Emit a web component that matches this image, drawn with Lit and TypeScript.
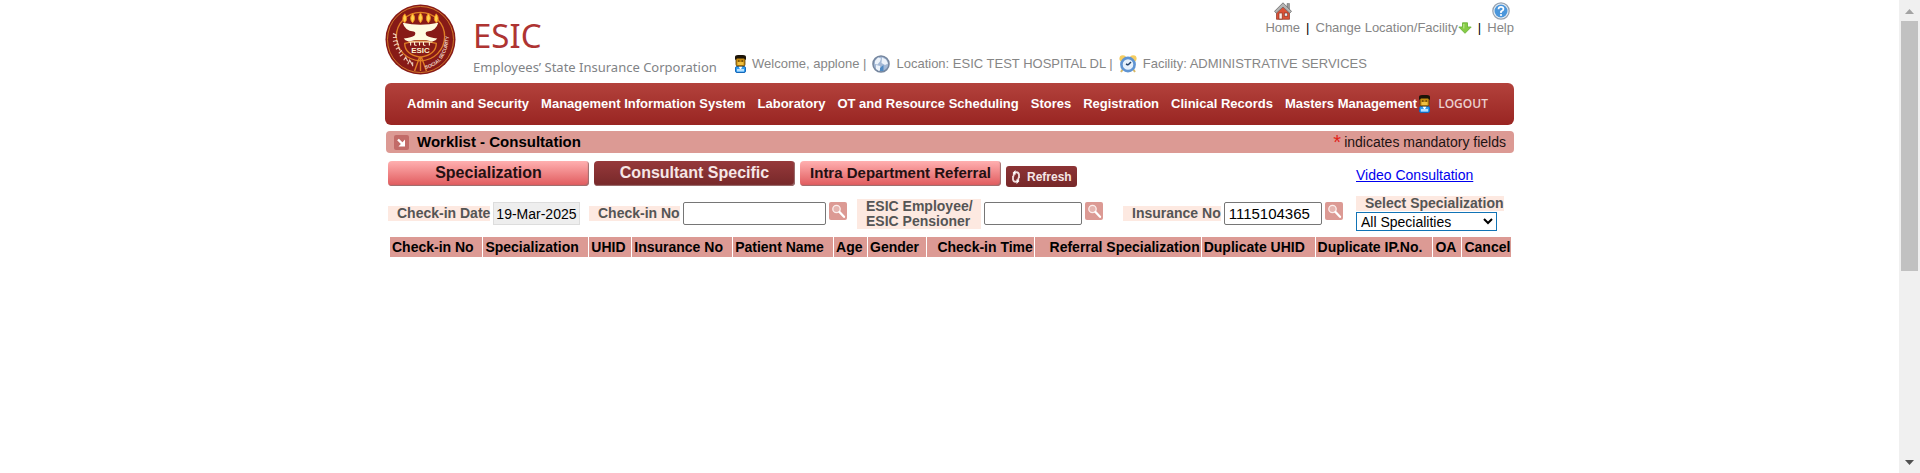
import { LitElement, html, css, svg } from "lit";
import { customElement, property } from "lit/decorators.js";

const MENU = [
  "Admin and Security",
  "Management Information System",
  "Laboratory",
  "OT and Resource Scheduling",
  "Stores",
  "Registration",
  "Clinical Records",
  "Masters Management",
];

const COLUMNS: { label: string; share: number; end?: boolean }[] = [
  { label: "Check-in No", share: 93 },
  { label: "Specialization", share: 106 },
  { label: "UHID", share: 43 },
  { label: "Insurance No", share: 101 },
  { label: "Patient Name", share: 101 },
  { label: "Age", share: 34 },
  { label: "Gender", share: 59 },
  { label: "Check-in Time", share: 108, end: true },
  { label: "Referral Specialization", share: 167, end: true },
  { label: "Duplicate UHID", share: 114 },
  { label: "Duplicate IP.No.", share: 118 },
  { label: "OA", share: 29 },
  { label: "Cancel", share: 49 },
];
const TOTAL = COLUMNS.reduce((sum, c) => sum + c.share, 0);

const GLYPHS: Record<string, { box: string; w: number; h: number; art: unknown }> = {
  user: {
    box: "0 0 11 18", w: 11, h: 18,
    art: svg`<rect x="0.5" y="11.500" width="10" height="6" rx="1.500" fill="#2f9bf0" stroke="#1668b8"/>
      <path d="M3.500 11.500h4l-2 3.500z" fill="#fff"/><rect x="2" y="14" width="7" height="2.500" fill="#b5e0ff"/>
      <rect x="1" y="2" width="9" height="9" rx="1.500" fill="#c48a10" stroke="#5a3d06" stroke-width=".8"/>
      <rect x="2.500" y="7" width="6" height="3" fill="#f0c040"/>
      <path d="M0 5V2Q0 0 3 0h5q3 0 3 2v3l-2-1.500H2z" fill="#1c1408"/>
      <path d="M3 6h1.500M6.500 6H8" stroke="#3a2604"/>`,
  },
  globe: {
    box: "0 0 18 18", w: 18, h: 18,
    art: svg`<circle cx="9" cy="9" r="8" fill="#a4b9d6" stroke="#76879f" stroke-width="1.600"/>
      <path d="M3 6l3-3.500 3 1-1 3-2.500 3-2.500-.5zM10 2.500l4 2 2 4-3 1.500-3.500-2zM4 10l4 1 1 3-2 2-3-2z" fill="#edf3fa"/>
      <path d="M9 12l2.500-2v6H8v-3z" fill="#4f8ac4"/>`,
  },
  clock: {
    box: "0 0 18 18", w: 18, h: 18,
    art: svg`<circle cx="3.800" cy="3.600" r="3.400" fill="#f5cd62"/><circle cx="14.200" cy="3.600" r="3.400" fill="#f5cd62"/>
      <path d="M4 14l-2 3M14 14l2 3" stroke="#d8b868" stroke-width="2"/>
      <circle cx="9" cy="9.500" r="6.600" fill="#e6f1fc" stroke="#5f94d2" stroke-width="2.600"/>
      <path d="M9 10l3-3M9 10l-2-1" stroke="#25436b" stroke-width="1.500"/>`,
  },
  home: {
    box: "0 0 18 18", w: 18, h: 18,
    art: svg`<path d="M13 1.500h2.500v6H13z" fill="#9a9a9a" stroke="#666" stroke-width=".5"/>
      <path d="M2.500 9.500L9 4l6.500 5.500v7.800h-13z" fill="#dc5136" stroke="#8b3222" stroke-width=".7"/>
      <path d="M9 .8L.5 9.300l1.800 1.900L9 5l6.700 6.200 1.800-1.900z" fill="#b5b5b5" stroke="#6a6a6a" stroke-width=".8"/>
      <rect x="5" y="11" width="3.200" height="6" fill="#fbeee8" stroke="#8b3222" stroke-width=".7"/>
      <rect x="10.300" y="11" width="3.400" height="3.200" fill="#e4eef6" stroke="#8b3222" stroke-width=".7"/>`,
  },
  help: {
    box: "0 0 18 18", w: 18, h: 18,
    art: svg`<circle cx="9" cy="9" r="8.200" fill="#e6edf4" stroke="#95a2b0" stroke-width="1.200"/>
      <circle cx="9" cy="9" r="6.500" fill="#4a96db"/>
      <path d="M6.500 7.200Q6.600 4.900 9 4.900t2.500 2.200Q11.500 8.300 9 9.500V11" fill="none" stroke="#fff" stroke-width="1.700"/>
      <circle cx="9" cy="13" r="1.100" fill="#fff"/>`,
  },
  down: {
    box: "0 0 14 12", w: 14, h: 12,
    art: svg`<path d="M4.500.8h5v4.200h3.700L7 11.300.8 5h3.700z" fill="#86cc45" stroke="#6cb33a" stroke-width=".9" stroke-linejoin="round"/>
      <path d="M5.800 2v4.500" stroke="#b9e78a" stroke-width="1.200"/>`,
  },
  corner: {
    box: "0 0 15 15", w: 15, h: 15,
    art: svg`<rect width="15" height="15" rx="2" fill="#c26b68"/>
      <path d="M4 4.500l5 5" stroke="#fff" stroke-width="2.400"/><path d="M11 4.500v7H4.500z" fill="#fff"/>`,
  },
  search: {
    box: "0 0 18 18", w: 18, h: 18,
    art: svg`<rect width="18" height="18" rx="2" fill="#dc9a94"/>
      <circle cx="7.500" cy="7" r="3.700" fill="#e5b5b0" stroke="#fbeeec" stroke-width="1.300"/>
      <path d="M10.500 10l4.500 4.800" stroke="#fff" stroke-width="2.300" stroke-linecap="round"/>`,
  },
  refresh: {
    box: "0 0 10 14", w: 10, h: 14,
    art: svg`<path d="M8 8V4.500Q7.500 2 5 2.300L3.500 3Q2.500 4 2.500 6.500" fill="none" stroke="#f3dede" stroke-width="1.800"/>
      <path d="M2 6v3.500Q2.500 12 5 11.700L6.500 11Q7.500 10 7.500 7.500" fill="none" stroke="#f3dede" stroke-width="1.800"/>
      <path d="M4.500 0v5L1.500 3zM5.500 14V9l3 2z" fill="#fff"/>`,
  },
};

@customElement("ui-glyph")
export class UiGlyph extends LitElement {
  @property() name = "user";
  static styles = css`
    :host { display: inline-flex; flex: none; }
    svg { display: block; }
  `;
  render() {
    const g = GLYPHS[this.name];
    return html`<svg width=${g.w} height=${g.h} viewBox=${g.box} aria-hidden="true">${g.art}</svg>`;
  }
}

@customElement("esic-emblem")
export class EsicEmblem extends LitElement {
  static styles = css`
    :host { display: block; flex: none; }
    svg { display: block; }
    text { font-family: "Liberation Sans", Arial, sans-serif; font-weight: bold; }
  `;
  render() {
    return html`<svg width="71" height="71" viewBox="0 0 72 72" role="img" aria-label="ESIC emblem">
      <circle cx="36" cy="36" r="35.500" fill="#871a17"/>
      <circle cx="36" cy="36" r="33.500" fill="none" stroke="#d9822b" stroke-width=".9"/>
      <circle cx="36" cy="33" r="24.500" fill="none" stroke="#e07f25" stroke-width="1.400"/>
      <g fill="#ffd34d" stroke="#f08a1c" stroke-width="1">
        <path d="M20 10q4 5 0 9-4-4 0-9zM28 9.500q4 5 0 9.500-4-4 0-9.500zM36 9q4 5 0 10-4-5 0-10zM44 9.500q4 5 0 9.500-4-4 0-9.500zM52 10q4 5 0 9-4-4 0-9z"/>
      </g>
      <path d="M18 19q18 4 36 0-2 8-11 9-3 1-1 4 3 2 11 3-1 2-5 3-12-3-24 0-4-1-5-3 8-1 11-3 2-3-1-4-9-1-11-9z" fill="#fffbe0"/>
      <path d="M20 40q16-5 32 0 0 11-16 14-16-3-16-14zM35 54L30 68M37 54l5 14M36 53v15" fill="none" stroke="#e07f25" stroke-width="1.400"/>
      <path d="M24 38.500h24M26 39v3M30 39v2.500l2 .5M35 39v3M39 39v2.500l2 .5M45 39v3" fill="none" stroke="#fff3d0" stroke-width="1.100"/>
      <text x="36" y="50" font-size="8" text-anchor="middle" fill="#fff3d0">ESIC</text>
      <path d="M8 30l3 1v3M8 34h4M8 38l4-1 1 2M9 42l4-2 1 2M11 46l3-2 1 3M14 50l3-3M15 53l3-2M19 57l2-3 2 4M23 61l2-4 3 5M28 59v4" fill="none" stroke="#e9c9b8" stroke-width="1.200"/>
      <path id="low" d="M41 66Q50 64 57 57" fill="none"/>
      <path id="high" d="M57 56Q65 46 65 28" fill="none"/>
      <text font-size="5" fill="#f0d8c8"><textPath href="#low">SOCIAL</textPath></text>
      <text font-size="5" fill="#f0d8c8"><textPath href="#high">SECURITY</textPath></text>
    </svg>`;
  }
}

@customElement("app-root")
export class AppRoot extends LitElement {
  static styles = css`
    :host {
      display: flex;
      min-height: 100vh;
      background: #fff;
      color: #000;
      font: 14px/16px "Liberation Sans", Arial, sans-serif;
    }
    * { box-sizing: border-box; }
    a { color: inherit; text-decoration: none; }
    .page { flex: 1; min-width: 0; }
    .sheet { max-width: 1129px; margin: 0 auto; }

    .header { display: flex; height: 83px; }
    .emblem { padding-top: 4px; }
    .brand { padding: 14px 0 0 17px; width: 279px; color: #7f8386; font: 13px/18px "Noto Sans", sans-serif; flex: none; white-space: nowrap; }
    .brand h1 { margin: 0; color: #ae3432; font: 33px/44px "Noto Sans", sans-serif; }
    .side { flex: 1; display: flex; flex-direction: column; justify-content: space-between; color: #868686; font-size: 13px; }
    .links { display: flex; justify-content: flex-end; align-items: flex-end; gap: 6px; padding-top: 2px; }
    .links .stack { display: flex; flex-direction: column; align-items: center; }
    .links .inline { display: flex; align-items: center; }
    .bar { color: #000; }
    .who { display: flex; align-items: center; gap: 6px; padding-bottom: 10px; white-space: nowrap; }

    .menu {
      display: flex; align-items: center; height: 42px; padding: 0 22px;
      border-radius: 6px; color: #fff; font-size: 13px; font-weight: bold; white-space: nowrap;
      background: linear-gradient(#b3423c, #992522);
    }
    .menu .items { display: flex; gap: 12px; }
    .logout { display: flex; align-items: center; gap: 8px; margin-left: 2px; color: #ecd0ce; font: 600 12px/16px "Open Sans", sans-serif; }

    .title {
      display: flex; align-items: center; height: 22px; margin: 6px 0 0 1px; padding: 0 8px;
      border-radius: 4px; background: #dc9a94;
    }
    .title h2 { flex: 1; margin: 0 0 0 8px; font-size: 15px; line-height: 20px; }
    .star { color: #e2231a; font-size: 20px; margin-right: 3px; }
    .note { display: flex; align-items: center; font-size: 14px; color: #1c1212; }

    .grid { display: grid; grid-template-columns: 201fr 268fr 266fr 233fr 158fr; padding-left: 3px; }
    .tabs { grid-column: span 4; display: flex; gap: 5px; align-items: flex-start; padding-top: 8px; }
    .tab {
      width: 201px; height: 25px; border: 0; border-radius: 4px; padding: 0 0 2px;
      font: bold 16px/20px "Liberation Sans", Arial, sans-serif; color: #241012;
      background: linear-gradient(#ffb0b0, #e0595c); box-shadow: inset -1px -1px 1px #9c7070;
    }
    .tab.long { font-size: 15px; }
    .tab.dark { color: #f6e6e6; background: linear-gradient(#96393b, #762829); }
    .refresh {
      display: flex; align-items: center; gap: 6px; height: 21px; margin-top: 5px; padding: 0 5px;
      border: 0; border-radius: 3px; color: #f6e6e6; background: linear-gradient(#8c3335, #762829);
      font: bold 12px/16px "Liberation Sans", Arial, sans-serif;
    }
    .video { padding-top: 14px; }
    .video a { color: #0000ee; text-decoration: underline; }

    .filters { height: 50px; align-items: center; padding-top: 3px; }
    .field { display: flex; align-items: center; gap: 3px; }
    .field label { padding-left: 9px; background: #fde9e1; color: #555; font-weight: bold; line-height: 15px; white-space: nowrap; }
    .field .wide { padding-right: 8px; }
    .field input { height: 23px; border: 1px solid #767676; border-radius: 2px; padding: 0 4px; font: 15px/20px "Liberation Sans", Arial, sans-serif; background: #fff; color: #000; }
    .field .date { width: 87px; padding: 0 2px; border-color: #ddd; border-radius: 0; background: #eee; font-size: 14px; }
    .w-no { width: 143px; }
    .w-id { width: 98px; }
    .find { border: 0; padding: 0 0 6px; background: none; display: flex; }
    .choice { display: flex; flex-direction: column; align-items: flex-start; gap: 1px; }
    .choice select { width: 141px; height: 19px; border: 1px solid #1173b5; padding: 0; background: #fff; color: #000; font: 14px/16px "Liberation Sans", Arial, sans-serif; }

    .list { padding: 0 3px 0 5px; }
    table { width: 100%; table-layout: fixed; border-collapse: collapse; }
    th { height: 20px; padding: 0 1px 0 2px; text-align: left; background: #dc9a94; border-right: 1px solid #fff; white-space: nowrap; }
    th:last-child { border-right: 0; }
    th.end { text-align: right; }

    .scroll { display: flex; flex-direction: column; align-items: center; justify-content: space-between; width: 21px; height: 100vh; background: #f0f0f0; flex: none; }
    .scroll svg { display: block; flex: none; }
    .track { flex: 1; width: 17px; }
    .thumb { height: 58%; background: #c1c1c1; }
  `;

  private find(label: string) {
    return html`<button type="button" class="find" aria-label=${label}><ui-glyph name="search"></ui-glyph></button>`;
  }

  render() {
    return html`
      <div class="page">
        <div class="sheet">
          <header class="header">
            <esic-emblem class="emblem"></esic-emblem>
            <div class="brand"><h1>ESIC</h1>Employees’ State Insurance Corporation</div>
            <div class="side">
              <nav class="links">
                <a class="stack" href="#home"><ui-glyph name="home"></ui-glyph>Home</a>
                <span class="bar">|</span>
                <a class="inline" href="#location">Change Location/Facility<ui-glyph name="down"></ui-glyph></a>
                <span class="bar">|</span>
                <a class="stack" href="#help"><ui-glyph name="help"></ui-glyph>Help</a>
              </nav>
              <div class="who">
                <ui-glyph name="user"></ui-glyph><span>Welcome, applone |</span>
                <ui-glyph name="globe"></ui-glyph><span>Location: ESIC TEST HOSPITAL DL |</span>
                <ui-glyph name="clock"></ui-glyph><span>Facility: ADMINISTRATIVE SERVICES</span>
              </div>
            </div>
          </header>
          <nav class="menu">
            <div class="items">${MENU.map((m) => html`<a href="#menu">${m}</a>`)}</div>
            <a class="logout" href="#logout"><ui-glyph name="user"></ui-glyph>LOGOUT</a>
          </nav>
          <div class="title">
            <ui-glyph name="corner"></ui-glyph>
            <h2>Worklist - Consultation</h2>
            <span class="note"><span class="star">*</span>indicates mandatory fields</span>
          </div>
          <div class="grid">
            <div class="tabs">
              <button class="tab">Specialization</button>
              <button class="tab dark">Consultant Specific</button>
              <button class="tab long">Intra Department Referral</button>
              <button class="refresh"><ui-glyph name="refresh"></ui-glyph>Refresh</button>
            </div>
            <div class="video"><a href="#video">Video Consultation</a></div>
          </div>
          <form class="grid filters">
            <div class="field">
              <label for="date">Check-in Date</label>
              <input id="date" class="date" readonly .value=${"19-Mar-2025"} />
            </div>
            <div class="field">
              <label for="checkin">Check-in No</label>
              <input id="checkin" class="w-no" />${this.find("Find check-in")}
            </div>
            <div class="field">
              <label for="employee" class="wide">ESIC Employee/<br />ESIC Pensioner</label>
              <input id="employee" class="w-id" />${this.find("Find employee")}
            </div>
            <div class="field">
              <label for="insurance">Insurance No</label>
              <input id="insurance" class="w-id" .value=${"1115104365"} />${this.find("Find insurance")}
            </div>
            <div class="field choice">
              <label for="speciality">Select Specialization</label>
              <select id="speciality"><option>All Specialities</option></select>
            </div>
          </form>
          <div class="list">
            <table>
              <colgroup>${COLUMNS.map((c) => html`<col style="width:${(c.share / TOTAL) * 100}%" />`)}</colgroup>
              <thead><tr>${COLUMNS.map((c) => html`<th class=${c.end ? "end" : ""}>${c.label}</th>`)}</tr></thead>
            </table>
          </div>
        </div>
      </div>
      <div class="scroll" aria-hidden="true">
        <svg width="9" height="21"><path d="M0 14h9L4.500 9z" fill="#a3a3a3"/></svg>
        <div class="track"><div class="thumb"></div></div>
        <svg width="9" height="21"><path d="M0 8h9l-4.500 5z" fill="#505050"/></svg>
      </div>
    `;
  }
}
